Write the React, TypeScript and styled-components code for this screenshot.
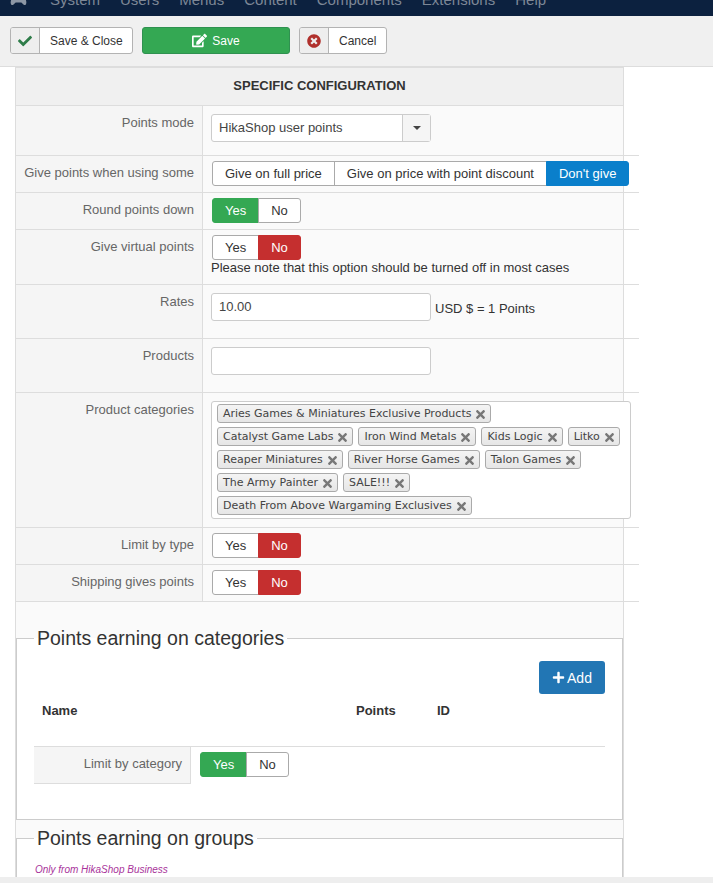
import styled, { createGlobalStyle } from "styled-components";
import { FaCheck, FaEdit, FaPlus, FaTimes, FaTimesCircle } from "react-icons/fa";

const GlobalStyle = createGlobalStyle`
  html, body {
    margin: 0;
    padding: 0;
    height: 883px;
    overflow: hidden;
    background: #fff;
    font-family: "Liberation Sans", Arial, sans-serif;
    font-size: 13px;
    color: #333;
  }
  * { box-sizing: border-box; }
`;

const menuItems = ["System", "Users", "Menus", "Content", "Components", "Extensions", "Help"];

const categories = [
  ["Aries Games & Miniatures Exclusive Products"],
  ["Catalyst Game Labs", "Iron Wind Metals", "Kids Logic", "Litko"],
  ["Reaper Miniatures", "River Horse Games", "Talon Games"],
  ["The Army Painter", "SALE!!!"],
  ["Death From Above Wargaming Exclusives"],
];

const YesNo = ({ value }: { value: "yes" | "no" }) => (
  <Toggle>
    <ToggleButton $tone={value === "yes" ? "green" : undefined}>Yes</ToggleButton>
    <ToggleButton $tone={value === "no" ? "red" : undefined}>No</ToggleButton>
  </Toggle>
);

const App = () => {
  return (
    <Page>
      <GlobalStyle />
      <NavBar>
        <NavLogo viewBox="0 0 24 16">
          <path d="M6 1h12c3 0 4 3 5 8 .6 4-2 6-4 4l-3-3H8l-3 3c-2 2-4.600 0-4-4C2 4 3 1 6 1z" fill="#8d97a5" />
        </NavLogo>
        {menuItems.map((item) => (
          <NavItem key={item}>{item}</NavItem>
        ))}
      </NavBar>

      <Toolbar>
        <ToolButton $width={123}>
          <ToolIcon>
            <FaCheck size={14} color="#2f7d4a" />
          </ToolIcon>
          <ToolLabel>Save &amp; Close</ToolLabel>
        </ToolButton>
        <SaveButton>
          <FaEdit size={15} />
          Save
        </SaveButton>
        <ToolButton $width={88}>
          <ToolIcon>
            <FaTimesCircle size={14} color="#b0302c" />
          </ToolIcon>
          <ToolLabel>Cancel</ToolLabel>
        </ToolButton>
      </Toolbar>

      <Panel>
        <PanelTitle>SPECIFIC CONFIGURATION</PanelTitle>

        <Row $height={50}>
          <RowLabel>Points mode</RowLabel>
          <RowValue>
            <SelectBox>
              <SelectText>HikaShop user points</SelectText>
              <SelectArrow />
            </SelectBox>
          </RowValue>
        </Row>

        <Row $height={37}>
          <RowLabel>Give points when using some</RowLabel>
          <RowValue>
            <Toggle>
              <ToggleButton>Give on full price</ToggleButton>
              <ToggleButton>Give on price with point discount</ToggleButton>
              <ToggleButton $tone="blue">Don't give</ToggleButton>
            </Toggle>
          </RowValue>
        </Row>

        <Row $height={37}>
          <RowLabel>Round points down</RowLabel>
          <RowValue>
            <YesNo value="yes" />
          </RowValue>
        </Row>

        <Row $height={55}>
          <RowLabel>Give virtual points</RowLabel>
          <RowValue>
            <YesNo value="no" />
            <Note>Please note that this option should be turned off in most cases</Note>
          </RowValue>
        </Row>

        <Row $height={54}>
          <RowLabel>Rates</RowLabel>
          <RowValue>
            <InlineField>
              <TextField>10.00</TextField>
              <Unit>USD $ = 1 Points</Unit>
            </InlineField>
          </RowValue>
        </Row>

        <Row $height={54}>
          <RowLabel>Products</RowLabel>
          <RowValue>
            <TextField />
          </RowValue>
        </Row>

        <Row $height={135}>
          <RowLabel>Product categories</RowLabel>
          <RowValue>
            <TagBox>
              {categories.map((line) => (
                <TagLine key={line[0]}>
                  {line.map((name) => (
                    <Tag key={name}>
                      {name}
                      <TagClose>
                        <FaTimes size={13} color="#777" />
                      </TagClose>
                    </Tag>
                  ))}
                </TagLine>
              ))}
            </TagBox>
          </RowValue>
        </Row>

        <Row $height={37}>
          <RowLabel>Limit by type</RowLabel>
          <RowValue>
            <YesNo value="no" />
          </RowValue>
        </Row>

        <Row $height={37}>
          <RowLabel>Shipping gives points</RowLabel>
          <RowValue>
            <YesNo value="no" />
          </RowValue>
        </Row>

        <Section>
          <SectionTitle>Points earning on categories</SectionTitle>
          <AddRow>
            <AddButton>
              <FaPlus size={13} />
              Add
            </AddButton>
          </AddRow>
          <ColumnHeads>
            <NameHead>Name</NameHead>
            <PointsHead>Points</PointsHead>
            <IdHead>ID</IdHead>
          </ColumnHeads>
          <SubRow>
            <SubLabel>Limit by category</SubLabel>
            <SubValue>
              <YesNo value="yes" />
            </SubValue>
          </SubRow>
        </Section>

        <Section $last>
          <SectionTitle>Points earning on groups</SectionTitle>
          <BusinessNote>Only from HikaShop Business</BusinessNote>
        </Section>
      </Panel>

      <ScrollTrack />
    </Page>
  );
};

export default App;

const Page = styled.div`
  width: 713px;
  height: 883px;
  overflow: hidden;
`;

const NavBar = styled.div`
  display: flex;
  align-items: flex-end;
  height: 16px;
  padding-left: 10px;
  background: #0c213f;
  overflow: hidden;
`;

const NavLogo = styled.svg`
  width: 17px;
  height: 12px;
  margin-right: 23px;
  margin-bottom: 9px;
  flex-shrink: 0;
`;

const NavItem = styled.span`
  color: #7d8796;
  font-size: 15px;
  line-height: 18px;
  margin-bottom: 7px;
  margin-right: 20px;
`;

const Toolbar = styled.div`
  display: flex;
  gap: 9px;
  height: 51px;
  padding: 11px 10px 0;
  background: #f0f0f0;
  border-bottom: 1px solid #ddd;
`;

const ToolButton = styled.div<{ $width: number }>`
  display: flex;
  width: ${({ $width }) => $width}px;
  height: 27px;
  border: 1px solid #b3b3b3;
  border-radius: 3px;
  background: #fff;
  overflow: hidden;
  color: #333;
  font-size: 12px;
`;

const ToolIcon = styled.span`
  display: flex;
  align-items: center;
  justify-content: center;
  width: 29px;
  background: #eee;
  border-right: 1px solid #b3b3b3;
`;

const ToolLabel = styled.span`
  display: flex;
  align-items: center;
  padding-left: 10px;
`;

const SaveButton = styled.div`
  display: flex;
  align-items: center;
  justify-content: center;
  gap: 5px;
  width: 148px;
  height: 27px;
  border: 1px solid #2f9150;
  border-radius: 3px;
  background: #34a853;
  color: #fff;
  font-size: 12px;
  font-weight: 500;
`;

const Panel = styled.div`
  width: 609px;
  margin-left: 15px;
  border-left: 1px solid #ddd;
  border-right: 1px solid #ddd;
  background: #fafafa;
  height: 816px;
`;

const PanelTitle = styled.div`
  display: flex;
  align-items: center;
  justify-content: center;
  height: 39px;
  padding-bottom: 2px;
  background: #f0f0f0;
  border-bottom: 1px solid #ddd;
  border-top: 1px solid #ddd;
  font-size: 13px;
  font-weight: 700;
  color: #333;
`;

const Row = styled.div<{ $height: number }>`
  display: flex;
  width: 623px;
  height: ${({ $height }) => $height}px;
  border-bottom: 1px solid #ddd;
`;

const RowLabel = styled.div`
  width: 187px;
  flex-shrink: 0;
  padding: 8px 8px 0 0;
  text-align: right;
  background: #f5f5f5;
  border-right: 1px solid #ddd;
  color: #666;
  font-size: 13px;
  line-height: 17px;
`;

const RowValue = styled.div`
  padding: 5px 0 0 8px;
  min-width: 0;
`;

const SelectBox = styled.div`
  display: flex;
  width: 220px;
  height: 28px;
  margin-top: 3px;
  border: 1px solid #ccc;
  border-radius: 3px;
  background: #fff;
`;

const SelectText = styled.span`
  flex: 1;
  padding: 0 7px;
  font-size: 13px;
  line-height: 26px;
  color: #444;
`;

const SelectArrow = styled.span`
  position: relative;
  width: 28px;
  background: #f5f5f5;
  border-left: 1px solid #ccc;

  &::after {
    content: "";
    position: absolute;
    top: 11px;
    left: 10px;
    border-style: solid;
    border-width: 4px 4px 0;
    border-color: #444 transparent transparent;
  }
`;

const Toggle = styled.div`
  display: inline-flex;
  height: 25px;
  margin-left: 1px;
  white-space: nowrap;
`;

const toneColors = { green: "#34a853", red: "#c52f2f", blue: "#0a7fcb" };

const ToggleButton = styled.span<{ $tone?: "green" | "red" | "blue" }>`
  display: flex;
  align-items: center;
  padding: 0 12px;
  font-size: 13px;
  border: 1px solid ${({ $tone }) => ($tone ? toneColors[$tone] : "#aaa")};
  margin-left: -1px;
  color: ${({ $tone }) => ($tone ? "#fff" : "#333")};
  background: ${({ $tone }) => ($tone ? toneColors[$tone] : "#fff")};

  &:first-child {
    margin-left: 0;
    border-radius: 3px 0 0 3px;
  }
  &:last-child {
    border-radius: 0 3px 3px 0;
  }
`;

const Note = styled.div`
  font-size: 13px;
  line-height: 16px;
  color: #333;
`;

const InlineField = styled.div`
  display: flex;
  align-items: center;
  gap: 4px;
`;

const TextField = styled.div`
  width: 220px;
  height: 28px;
  margin-top: 3px;
  padding: 0 7px;
  border: 1px solid #ccc;
  border-radius: 3px;
  background: #fff;
  font-size: 13px;
  line-height: 26px;
  color: #444;
`;

const Unit = styled.span`
  font-size: 13px;
  margin-top: 6px;
  color: #333;
`;

const TagBox = styled.div`
  width: 420px;
  height: 118px;
  margin-top: 3px;
  padding: 0 5px;
  border: 1px solid #ccc;
  border-radius: 3px;
  background: #fff;
`;

const TagLine = styled.div`
  display: flex;
  gap: 5px;
  height: 23px;
  padding-top: 2px;
`;

const Tag = styled.span`
  display: flex;
  align-items: center;
  height: 19px;
  padding: 0 3px 0 5px;
  border: 1px solid #aaa;
  border-radius: 3px;
  background: linear-gradient(#f4f4f4, #e6e6e6);
  font-family: "DejaVu Sans", Verdana, sans-serif;
  font-size: 11px;
  color: #444;
  white-space: nowrap;
`;

const TagClose = styled.span`
  display: flex;
  margin-left: 3px;
  margin-top: 1px;
`;

const Section = styled.fieldset<{ $last?: boolean }>`
  width: 607px;
  margin: ${({ $last }) => ($last ? "6px 0 0" : "24px 0 0")};
  padding: 0 17px;
  height: ${({ $last }) => ($last ? "60px" : "194px")};
  border: 1px solid #ccc;
  background: #fff;
  min-width: 0;
`;

const SectionTitle = styled.legend`
  padding: 0 3px;
  font-size: 19.5px;
  line-height: 24px;
  color: #333;
`;

const AddRow = styled.div`
  display: flex;
  justify-content: flex-end;
  padding-top: 11px;
`;

const AddButton = styled.div`
  display: flex;
  align-items: center;
  justify-content: center;
  gap: 2px;
  width: 66px;
  height: 33px;
  border-radius: 3px;
  background: #2276b4;
  color: #fff;
  font-size: 14px;
`;

const ColumnHeads = styled.div`
  display: flex;
  height: 53px;
  padding-top: 9px;
  border-bottom: 1px solid #ddd;
  font-size: 13px;
  line-height: 16px;
`;

const NameHead = styled.span`
  width: 322px;
  padding-left: 8px;
  font-weight: 700;
`;

const PointsHead = styled.span`
  width: 81px;
  font-weight: 700;
`;

const IdHead = styled.span`
  font-weight: 700;
`;

const SubRow = styled.div`
  display: flex;
  height: 37px;
`;

const SubLabel = styled(RowLabel)`
  width: 157px;
  border-bottom: 1px solid #ddd;
`;

const SubValue = styled.div`
  padding: 5px 0 0 8px;
`;

const BusinessNote = styled.div`
  padding: 14px 0 0 1px;
  font-size: 10px;
  font-style: italic;
  color: #a8329a;
`;

const ScrollTrack = styled.div`
  position: fixed;
  left: 0;
  right: 0;
  bottom: 0;
  height: 6px;
  background: #eee;
`;
